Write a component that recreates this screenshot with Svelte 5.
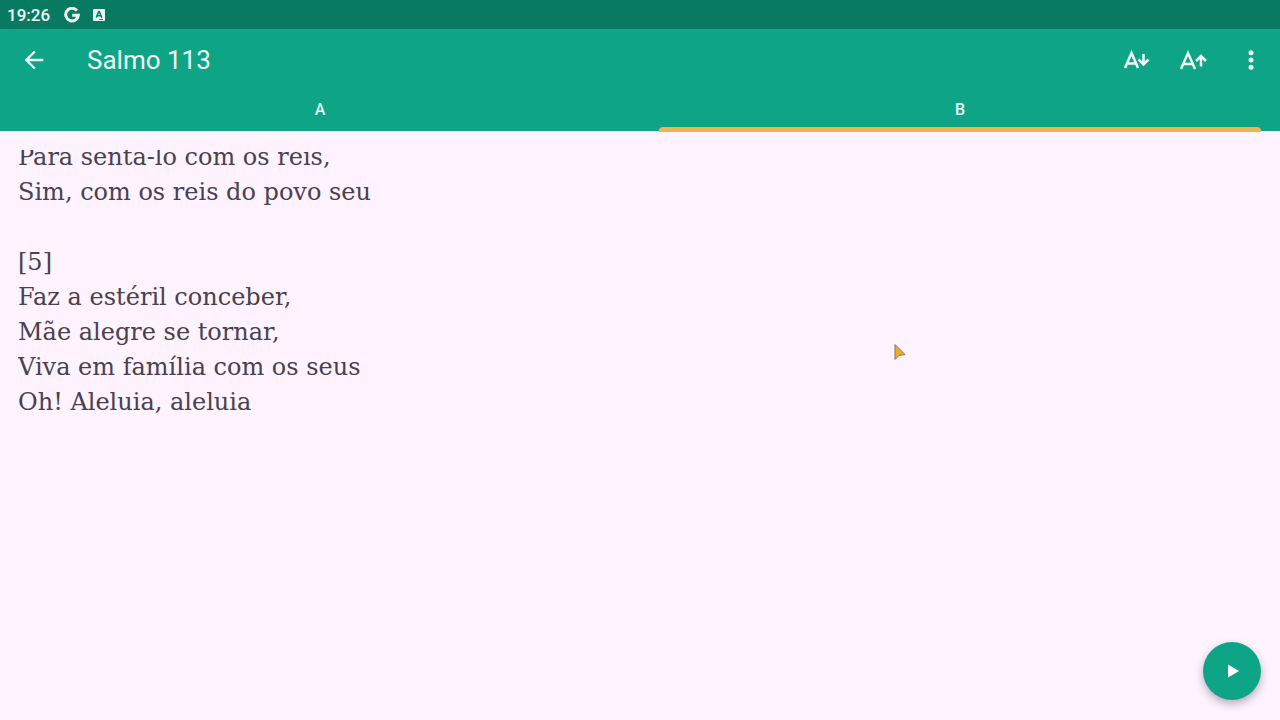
<script>
  const tabs = ['A', 'B'];
  let active = 'B';

  const lines = [
    'Para sentá-lo com os reis,',
    'Sim, com os reis do povo seu',
    '',
    '[5]',
    'Faz a estéril conceber,',
    'Mãe alegre se tornar,',
    'Viva em família com os seus',
    'Oh! Aleluia, aleluia',
  ];
</script>

<div class="screen">
  <div class="status">
    <span>19:26</span>
    <svg class="google" width="16" height="16" viewBox="0 0 16 16">
      <path d="M12.9 3.6A6.3 6.3 0 1 0 14.3 8.2H8.2" />
    </svg>
    <svg width="12" height="12" viewBox="0 0 12 12">
      <rect width="12" height="12" rx="1" fill="#f0fbf8" />
      <path d="M3.2 8.6L5.7 2.6H6.3L8.8 8.6M4.2 6.8H7.8" fill="none" stroke="#087a61" stroke-width="1.5" />
      <path d="M6.5 10.5H10" stroke="#087a61" />
    </svg>
  </div>

  <header>
    <div class="toolbar">
      <button aria-label="Voltar">
        <svg width="28" height="28" viewBox="0 0 24 24">
          <path d="M20 11H7.83l5.59-5.59L12 4l-8 8 8 8 1.41-1.41L7.83 13H20z" />
        </svg>
      </button>
      <h1>Salmo 113</h1>
      <button aria-label="Diminuir texto">
        <svg class="size" width="28" height="28" viewBox="0 0 28 28">
          <path d="M2 22L8.5 7L15 22M4.4 17.5H12.6" />
          <path d="M20.5 8V18M15.5 13.5L20.5 18.5L25.5 13.5" />
        </svg>
      </button>
      <button aria-label="Aumentar texto">
        <svg class="size" width="28" height="28" viewBox="0 0 28 28">
          <path d="M1 23L8 7L15 23M3.6 18H12.4" />
          <path d="M21 20.5V10M16 15L21 10L26 15" />
        </svg>
      </button>
      <button aria-label="Mais opções">
        <svg width="28" height="28" viewBox="0 0 28 28">
          <circle cx="14" cy="6.8" r="2.5" />
          <circle cx="14" cy="14" r="2.5" />
          <circle cx="14" cy="21.2" r="2.5" />
        </svg>
      </button>
    </div>

    <div class="tabs" role="tablist">
      {#each tabs as tab}
        <button
          role="tab"
          aria-selected={active === tab}
          class:active={active === tab}
          on:click={() => (active = tab)}>{tab}</button
        >
      {/each}
    </div>
  </header>

  <main>
    <div class="lyrics">
      {#each lines as line}
        <p>{line}</p>
      {/each}
    </div>
  </main>

  <button class="play" aria-label="Reproduzir">
    <svg width="28" height="28" viewBox="0 0 28 28">
      <path d="M10 7.5V20.5L21 14z" />
    </svg>
  </button>

  <svg class="pointer" width="14" height="20" viewBox="0 0 14 20">
    <path d="M2 2.5V17.5L6 13.5L12 12.5z" />
  </svg>
</div>

<style>
  :global(body) {
    margin: 0;
    background: #fef3ff;
  }

  .screen {
    display: flex;
    flex-direction: column;
    min-height: 100vh;
    font-family: Roboto, sans-serif;
  }

  .status {
    display: flex;
    align-items: center;
    gap: 14px;
    height: 29px;
    padding: 0 7px;
    background: #087a61;
    color: #f0fbf8;
    font-size: 17px;
    font-weight: 500;
  }

  .google {
    fill: none;
    stroke: #f0fbf8;
    stroke-width: 3;
  }

  .google + svg {
    margin-left: -1px;
  }

  header {
    background: #0da586;
    color: #f0fbf8;
  }

  button {
    padding: 0;
    border: 0;
    background: none;
    color: inherit;
    font-family: inherit;
    cursor: pointer;
  }

  svg {
    display: block;
    fill: currentColor;
  }

  .toolbar {
    display: flex;
    align-items: center;
    gap: 29px;
    height: 62px;
    padding: 0 15px 0 20px;
  }

  h1 {
    flex: 1;
    margin: 0 0 0 10px;
    font-size: 26px;
    font-weight: 400;
  }

  .size {
    fill: none;
    stroke: currentColor;
    stroke-width: 2.5;
  }

  .tabs {
    display: flex;
  }

  .tabs button {
    position: relative;
    flex: 1;
    height: 40px;
    padding-bottom: 3px;
    font-size: 16px;
    font-weight: 500;
  }

  .tabs .active::after {
    content: '';
    position: absolute;
    right: 19px;
    bottom: -1px;
    left: 19px;
    height: 5px;
    border-radius: 4px 4px 0 0;
    background: #edb552;
  }

  main {
    flex: 1;
    padding: 19px 18px;
  }

  .lyrics {
    overflow: hidden;
    color: #49414f;
    font-family: 'DejaVu Serif', serif;
    font-size: 24px;
    line-height: 35px;
  }

  .lyrics p {
    min-height: 35px;
    margin: 0;
  }

  /* scrolled part way into the verse */
  .lyrics p:first-child {
    margin-top: -10px;
  }

  .play {
    position: fixed;
    right: 19px;
    bottom: 20px;
    display: grid;
    place-items: center;
    width: 58px;
    height: 58px;
    border-radius: 50%;
    background: #0da586;
    color: #fff;
    box-shadow: 0 4px 8px rgba(60, 40, 70, 0.35);
  }

  .pointer {
    position: absolute;
    top: 342px;
    left: 893px;
    fill: #f5a623;
    stroke: #8b7868;
  }
</style>
